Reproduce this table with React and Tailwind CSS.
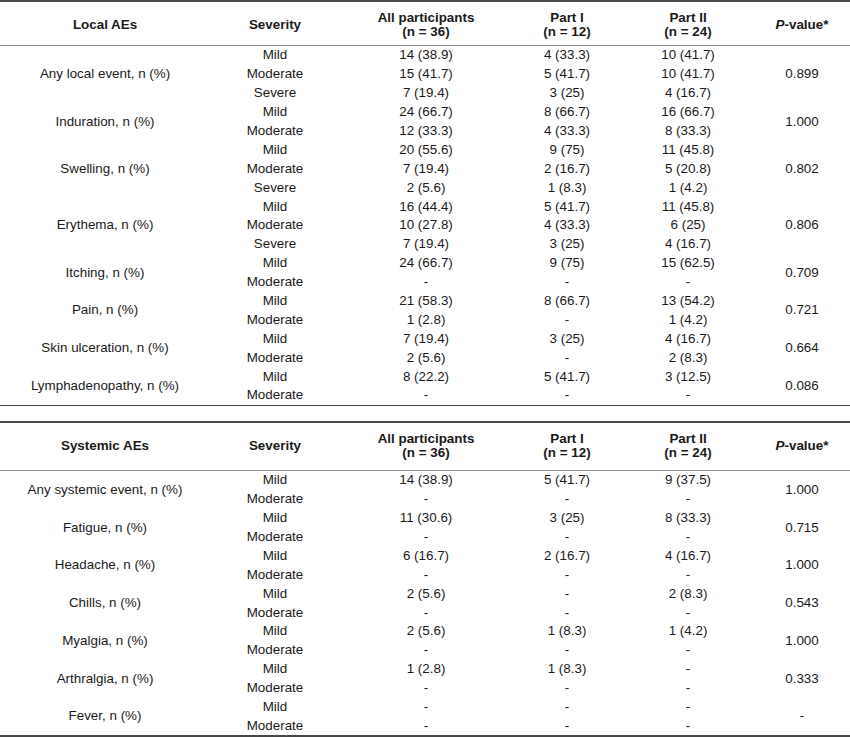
const localRows = [
  {
    label: "Any local event, n (%)",
    p: "0.899",
    rows: [
      ["Mild", "14 (38.9)", "4 (33.3)", "10 (41.7)"],
      ["Moderate", "15 (41.7)", "5 (41.7)", "10 (41.7)"],
      ["Severe", "7 (19.4)", "3 (25)", "4 (16.7)"],
    ],
  },
  {
    label: "Induration, n (%)",
    p: "1.000",
    rows: [
      ["Mild", "24 (66.7)", "8 (66.7)", "16 (66.7)"],
      ["Moderate", "12 (33.3)", "4 (33.3)", "8 (33.3)"],
    ],
  },
  {
    label: "Swelling, n (%)",
    p: "0.802",
    rows: [
      ["Mild", "20 (55.6)", "9 (75)", "11 (45.8)"],
      ["Moderate", "7 (19.4)", "2 (16.7)", "5 (20.8)"],
      ["Severe", "2 (5.6)", "1 (8.3)", "1 (4.2)"],
    ],
  },
  {
    label: "Erythema, n (%)",
    p: "0.806",
    rows: [
      ["Mild", "16 (44.4)", "5 (41.7)", "11 (45.8)"],
      ["Moderate", "10 (27.8)", "4 (33.3)", "6 (25)"],
      ["Severe", "7 (19.4)", "3 (25)", "4 (16.7)"],
    ],
  },
  {
    label: "Itching, n (%)",
    p: "0.709",
    rows: [
      ["Mild", "24 (66.7)", "9 (75)", "15 (62.5)"],
      ["Moderate", "-", "-", "-"],
    ],
  },
  {
    label: "Pain, n (%)",
    p: "0.721",
    rows: [
      ["Mild", "21 (58.3)", "8 (66.7)", "13 (54.2)"],
      ["Moderate", "1 (2.8)", "-", "1 (4.2)"],
    ],
  },
  {
    label: "Skin ulceration, n (%)",
    p: "0.664",
    rows: [
      ["Mild", "7 (19.4)", "3 (25)", "4 (16.7)"],
      ["Moderate", "2 (5.6)", "-", "2 (8.3)"],
    ],
  },
  {
    label: "Lymphadenopathy, n (%)",
    p: "0.086",
    rows: [
      ["Mild", "8 (22.2)", "5 (41.7)", "3 (12.5)"],
      ["Moderate", "-", "-", "-"],
    ],
  },
];

const systemicRows = [
  {
    label: "Any systemic event, n (%)",
    p: "1.000",
    rows: [
      ["Mild", "14 (38.9)", "5 (41.7)", "9 (37.5)"],
      ["Moderate", "-", "-", "-"],
    ],
  },
  {
    label: "Fatigue, n (%)",
    p: "0.715",
    rows: [
      ["Mild", "11 (30.6)", "3 (25)", "8 (33.3)"],
      ["Moderate", "-", "-", "-"],
    ],
  },
  {
    label: "Headache, n (%)",
    p: "1.000",
    rows: [
      ["Mild", "6 (16.7)", "2 (16.7)", "4 (16.7)"],
      ["Moderate", "-", "-", "-"],
    ],
  },
  {
    label: "Chills, n (%)",
    p: "0.543",
    rows: [
      ["Mild", "2 (5.6)", "-", "2 (8.3)"],
      ["Moderate", "-", "-", "-"],
    ],
  },
  {
    label: "Myalgia, n (%)",
    p: "1.000",
    rows: [
      ["Mild", "2 (5.6)", "1 (8.3)", "1 (4.2)"],
      ["Moderate", "-", "-", "-"],
    ],
  },
  {
    label: "Arthralgia, n (%)",
    p: "0.333",
    rows: [
      ["Mild", "1 (2.8)", "1 (8.3)", "-"],
      ["Moderate", "-", "-", "-"],
    ],
  },
  {
    label: "Fever, n (%)",
    p: "-",
    rows: [
      ["Mild", "-", "-", "-"],
      ["Moderate", "-", "-", "-"],
    ],
  },
];

const cols = "grid grid-cols-[210px_130px_172px_110px_132px_96px]";

function Header({ title, height }) {
  return (
    <div className={`${cols} ${height} items-center border-b border-[#8a8a8a] font-bold leading-[14px] text-center`}>
      <div>{title}</div>
      <div>Severity</div>
      <div>
        All participants
        <br />
        (n = 36)
      </div>
      <div>
        Part I
        <br />
        (n = 12)
      </div>
      <div>
        Part II
        <br />
        (n = 24)
      </div>
      <div>
        <i>P</i>-value*
      </div>
    </div>
  );
}

function Group({ group }) {
  const n = group.rows.length;
  return (
    <div className={`${cols} text-center`}>
      {/* label spans all severity rows */}
      <div
        className="col-start-1 flex items-center justify-center"
        style={{ gridRow: `1 / span ${n}` }}
      >
        {group.label}
      </div>
      {group.rows.map((r, i) => (
        <div key={i} className="contents">
          {r.map((cell, j) => (
            <div
              key={j}
              className="h-[18.9px] flex items-center justify-center"
              style={{ gridColumn: j + 2, gridRow: i + 1 }}
            >
              {cell}
            </div>
          ))}
        </div>
      ))}
      <div
        className="flex items-center justify-center"
        style={{ gridColumn: 6, gridRow: `1 / span ${n}` }}
      >
        {group.p}
      </div>
    </div>
  );
}

export default function App() {
  return (
    <div className="w-[850px] h-[738px] bg-white text-[#1a1a1a] text-[13.4px] font-['Liberation_Sans',Arial,sans-serif] overflow-hidden">
      {/* Local AEs */}
      <div className="border-t-2 border-b border-[#4a4a4a]">
        <Header title="Local AEs" height="h-[44px] pt-[3px]" />
        {localRows.map((g) => (
          <Group key={g.label} group={g} />
        ))}
      </div>

      <div className="h-[15px]" />

      {/* Systemic AEs */}
      <div className="border-t-2 border-b-2 border-[#4a4a4a]">
        <Header title="Systemic AEs" height="h-[48px]" />
        {systemicRows.map((g) => (
          <Group key={g.label} group={g} />
        ))}
      </div>
    </div>
  );
}
